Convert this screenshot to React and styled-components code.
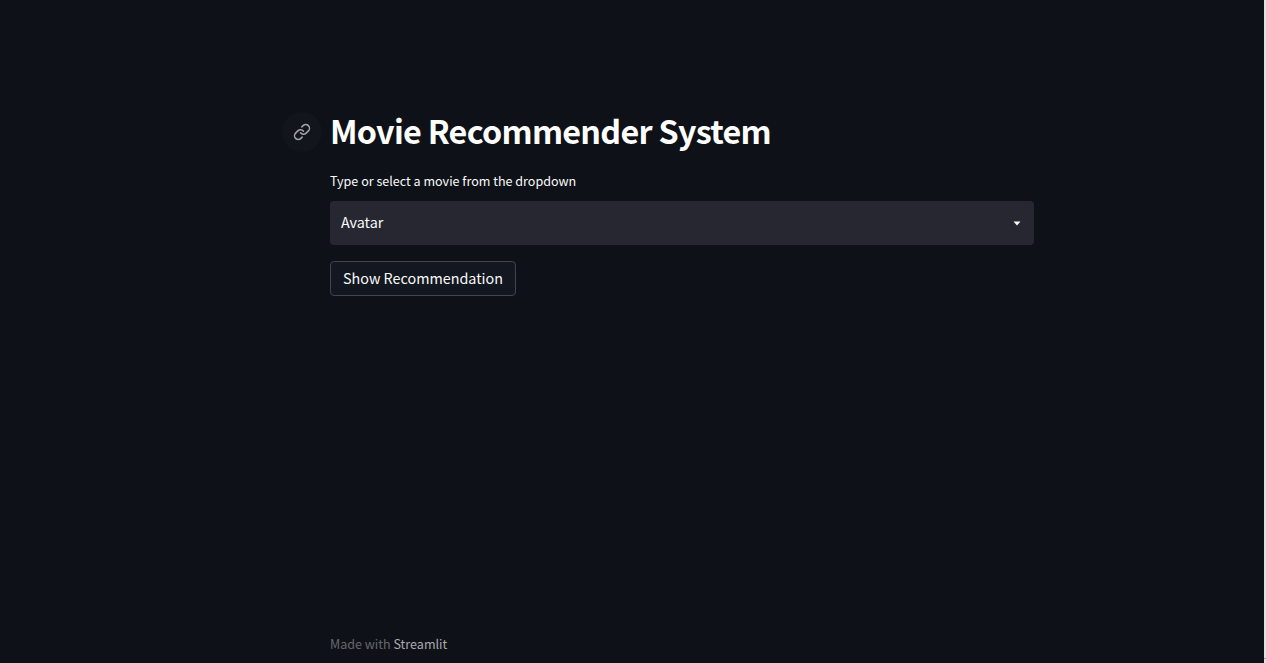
import React from "react";
import styled, { createGlobalStyle } from "styled-components";
import { Link } from "lucide-react";

const Global = createGlobalStyle`
  * { box-sizing: border-box; }
  body { margin: 0; background: #0e1117; overflow: hidden; }
`;
const Shell = styled.div`
  display: flex;
  height: 663px;
  background: #0e1117;
`;
const Page = styled.main`
  flex: 1;
  display: flex;
  flex-direction: column;
  padding: 112px 0 0 330px;
  color: #fafafa;
  font-family: "Noto Sans CJK SC", "Noto Sans", sans-serif;
`;
const Edge = styled.div`
  width: 2px;
  background: linear-gradient(#dfe1e5 658px, #a2a4a8 658px, #a2a4a8 659px, #dfe1e5 659px);
`;
const Heading = styled.header`
  display: flex;
  align-items: center;
  gap: 8px;
  height: 40px;
  margin-left: -48px;
`;
const Anchor = styled.a`
  width: 40px;
  height: 40px;
  border-radius: 50%;
  background: #12151c;
  color: #a3a5aa;
  display: flex;
  align-items: center;
  justify-content: center;
`;
const Title = styled.h1`
  margin: 0;
  padding-bottom: 5px;
  font-size: 32.3px;
  line-height: 40px;
  font-weight: 700;
  letter-spacing: -0.72px;
  color: #fff;
  white-space: nowrap;
`;
const Label = styled.label`
  margin-top: 19px;
  height: 20px;
  font-size: 12.55px;
  line-height: 20px;
  white-space: nowrap;
`;
const Select = styled.div`
  margin-top: 10px;
  width: 704px;
  height: 44px;
  padding: 0 13px 0 11px;
  border-radius: 4px;
  background: #262730;
  display: flex;
  align-items: center;
  justify-content: space-between;
  font-size: 14.35px;
  line-height: 24px;
`;
const Value = styled.span`
  padding-bottom: 2px;
`;
const Button = styled.button`
  margin: 16px 0 0;
  padding: 0 0 2px;
  width: 186px;
  height: 35px;
  border: 1px solid #41444c;
  border-radius: 4px;
  background: #13171f;
  color: #fafafa;
  font: inherit;
  font-size: 14.35px;
  line-height: 24px;
`;
const Footer = styled.footer`
  margin-top: auto;
  height: 29px;
  font-size: 12.55px;
  line-height: 20px;
  color: #66686d;
`;
const Brand = styled.span`
  color: #a9abb0;
`;

export default function App() {
  return (
    <Shell>
      <Global />
      <Page>
        <Heading>
          <Anchor><Link size={18} strokeWidth={2} /></Anchor>
          <Title>Movie Recommender System</Title>
        </Heading>
        <Label>Type or select a movie from the dropdown</Label>
        <Select>
          <Value>Avatar</Value>
          <svg width="8" height="5" viewBox="0 0 8 5"><path d="M0.5 0.5h7L4 4.5z" fill="#fafafa" /></svg>
        </Select>
        <Button>Show Recommendation</Button>
        <Footer>Made with <Brand>Streamlit</Brand></Footer>
      </Page>
      <Edge />
    </Shell>
  );
}
